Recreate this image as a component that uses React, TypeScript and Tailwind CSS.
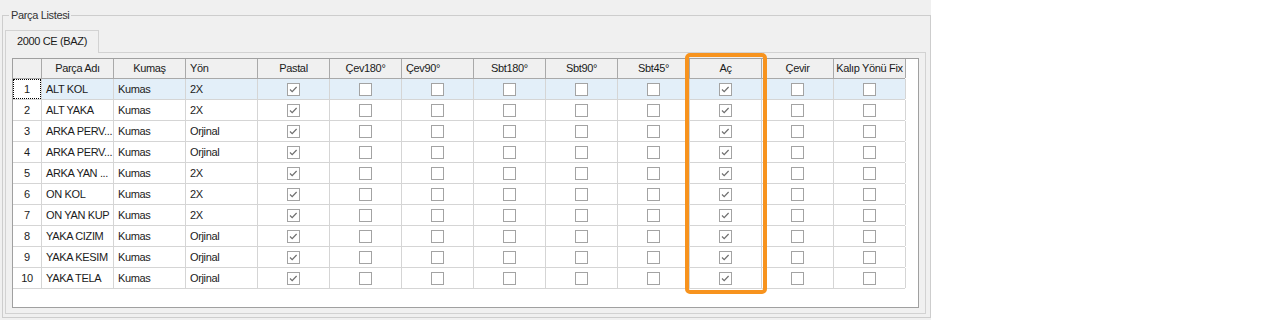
import React from "react";

type Row = { no: number; name: string; kumas: string; yon: string };

const rows: Row[] = [
  { no: 1, name: "ALT KOL", kumas: "Kumas", yon: "2X" },
  { no: 2, name: "ALT YAKA", kumas: "Kumas", yon: "2X" },
  { no: 3, name: "ARKA PERV...", kumas: "Kumas", yon: "Orjinal" },
  { no: 4, name: "ARKA PERV...", kumas: "Kumas", yon: "Orjinal" },
  { no: 5, name: "ARKA YAN ...", kumas: "Kumas", yon: "2X" },
  { no: 6, name: "ON KOL", kumas: "Kumas", yon: "2X" },
  { no: 7, name: "ON YAN KUP", kumas: "Kumas", yon: "2X" },
  { no: 8, name: "YAKA CIZIM", kumas: "Kumas", yon: "Orjinal" },
  { no: 9, name: "YAKA KESIM", kumas: "Kumas", yon: "Orjinal" },
  { no: 10, name: "YAKA TELA", kumas: "Kumas", yon: "Orjinal" },
];

// checkbox columns, true = checked in every row
const checkCols = [
  { title: "Pastal", on: true },
  { title: "Çev180°", on: false },
  { title: "Çev90°", on: false, left: true },
  { title: "Sbt180°", on: false },
  { title: "Sbt90°", on: false },
  { title: "Sbt45°", on: false },
  { title: "Aç", on: true },
  { title: "Çevir", on: false },
  { title: "Kalıp Yönü Fix", on: false },
];

const CheckBox = ({ checked }: { checked: boolean }) => (
  <div className="w-[13px] h-[13px] border border-[#a3a3a3] bg-white flex items-center justify-center">
    {checked && (
      <svg width="11" height="11" viewBox="0 0 11 11">
        <path d="M2 5.5 L4.2 7.7 L8.6 3" fill="none" stroke="#6f6f6f" strokeWidth="1.2" />
      </svg>
    )}
  </div>
);

const HeadCell = ({ children, left }: { children?: React.ReactNode; left?: boolean }) => (
  <div
    className={`w-[72px] shrink-0 h-full border-r border-[#a9a9a9] flex items-center whitespace-nowrap ${
      left ? "justify-start pl-[4px]" : "justify-center"
    }`}
  >
    {children}
  </div>
);

const App = () => {
  return (
    <div className="flex h-[320px] w-full bg-white font-['Liberation_Sans',Arial,sans-serif] text-[11px] tracking-[-0.35px] text-[#1b1b1b] leading-none">
      <div className="relative w-[931px] h-[320px] shrink-0 bg-[#f0f0f0] pt-[15px] pl-[2px]">
        <div className="relative w-[929px] h-[303px] border border-[#cdcdcd] pt-[14px] pl-[2px] pr-[4px] pb-[4px]">
          <div className="absolute left-[6px] -top-[7px] px-[2px] bg-[#f0f0f0] text-[#333] leading-[13px]">
            Parça Listesi
          </div>

          <div className="flex flex-col">
            <div className="relative z-10 -mb-px w-[94px] h-[23px] border border-b-0 border-[#d2d2d2] bg-[#f0f0f0] flex items-center justify-center pb-[2px]">
              2000 CE (BAZ)
            </div>
            <div className="w-[921px] h-[262px] border border-[#d2d2d2] pt-[5px] pl-[6px]">
              <div className="w-[907px] h-[250px] border border-[#a0a0a0] bg-white">
                <div className="flex h-[20px] bg-[#f0f0f0] border-b border-[#a9a9a9] w-[892px]">
                  <div className="w-[29px] shrink-0 h-full border-r border-[#a9a9a9]" />
                  <HeadCell>Parça Adı</HeadCell>
                  <HeadCell>Kumaş</HeadCell>
                  <HeadCell left>Yön</HeadCell>
                  {checkCols.map((c) => (
                    <HeadCell key={c.title} left={c.left}>
                      {c.title}
                    </HeadCell>
                  ))}
                </div>

                {rows.map((r) => {
                  const sel = r.no === 1;
                  const cellBg = sel ? "bg-[#e3eff9]" : "bg-white";
                  return (
                    <div key={r.no} className="flex h-[21px] w-[892px] border-b border-[#d5d5d5]">
                      <div className="w-[29px] shrink-0 h-full border-r border-[#d5d5d5] bg-white">
                        <div
                          className={`h-full flex items-center justify-center ${
                            sel ? "border border-dotted border-black" : ""
                          }`}
                        >
                          {r.no}
                        </div>
                      </div>
                      {[r.name, r.kumas, r.yon].map((t, i) => (
                        <div
                          key={i}
                          className={`w-[72px] shrink-0 h-full border-r border-[#d5d5d5] flex items-center pl-[4px] whitespace-nowrap overflow-hidden ${cellBg}`}
                        >
                          {t}
                        </div>
                      ))}
                      {checkCols.map((c) => (
                        <div
                          key={c.title}
                          className={`w-[72px] shrink-0 h-full border-r border-[#d5d5d5] flex items-center justify-center ${cellBg}`}
                        >
                          <CheckBox checked={c.on} />
                        </div>
                      ))}
                    </div>
                  );
                })}
              </div>
            </div>
          </div>
        </div>

        <div className="absolute left-[685px] top-[53px] w-[82px] h-[241px] border-[4px] border-[#f7931e] rounded-[5px]" />
      </div>
    </div>
  );
};

export default App;
